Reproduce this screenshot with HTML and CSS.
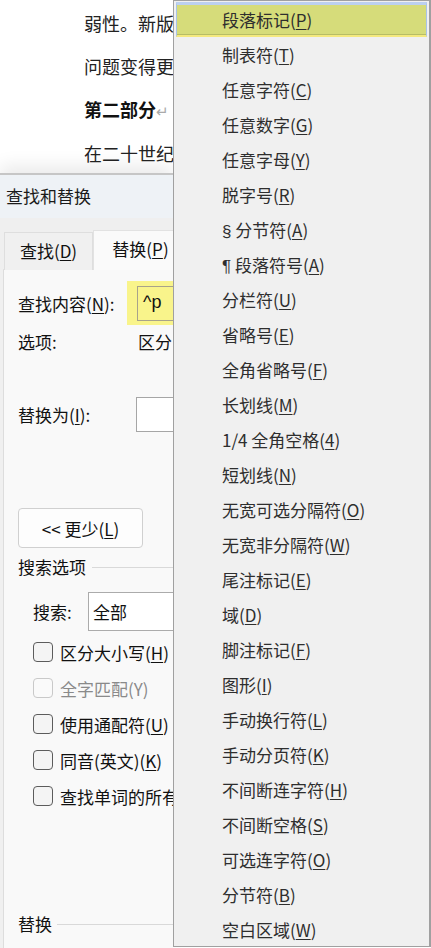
FILE: index.html
```html
<!DOCTYPE html>
<html lang="zh-CN">
<head>
  <meta charset="UTF-8" />
  <meta name="viewport" content="width=device-width, initial-scale=1.0" />
  <title>查找和替换</title>
  <link rel="stylesheet" href="styles.css">
</head>
<body>
  <div class="doc">
    <p>弱性。新版</p>
    <p>问题变得更</p>
    <p><b>第二部分</b><span class="pmark">↵</span></p>
    <p>在二十世纪</p>
  </div>

  <div class="dialog">
    <div class="titlebar">查找和替换</div>
    <div class="tabs">
      <div class="tab">查找(<u>D</u>)</div>
      <div class="tab active">替换(<u>P</u>)</div>
    </div>
    <div class="panel">
      <div class="row find-row">
        <span class="label w-find">查找内容(<u>N</u>):</span>
        <span class="hl"><span class="input">^p</span></span>
      </div>
      <div class="row opt-row">
        <span class="label w-opt">选项:</span>
        <span>区分</span>
      </div>
      <div class="row repl-row">
        <span class="label w-repl">替换为(<u>I</u>):</span>
        <span class="input wide"></span>
      </div>
      <button class="btn">&lt;&lt; 更少(<u>L</u>)</button>

      <div class="group">搜索选项<span class="rule"></span></div>
      <div class="row search-row">
        <span class="label w-search">搜索:</span>
        <span class="select">全部</span>
      </div>
      <div class="checks">
        <div class="check"><span class="box"></span>区分大小写(<u>H</u>)</div>
        <div class="check disabled"><span class="box"></span>全字匹配(Y)</div>
        <div class="check"><span class="box"></span>使用通配符(<u>U</u>)</div>
        <div class="check"><span class="box"></span>同音(英文)(<u>K</u>)</div>
        <div class="check"><span class="box"></span>查找单词的所有</div>
      </div>

      <div class="group second">替换<span class="rule"></span></div>
    </div>
  </div>

  <ul class="menu">
    <li class="current">段落标记(<u>P</u>)</li>
    <li>制表符(<u>T</u>)</li>
    <li>任意字符(<u>C</u>)</li>
    <li>任意数字(<u>G</u>)</li>
    <li>任意字母(<u>Y</u>)</li>
    <li>脱字号(<u>R</u>)</li>
    <li><span class="sym">§</span> 分节符(<u>A</u>)</li>
    <li><span class="sym">¶</span> 段落符号(<u>A</u>)</li>
    <li>分栏符(<u>U</u>)</li>
    <li>省略号(<u>E</u>)</li>
    <li>全角省略号(<u>F</u>)</li>
    <li>长划线(<u>M</u>)</li>
    <li>1/4 全角空格(<u>4</u>)</li>
    <li>短划线(<u>N</u>)</li>
    <li>无宽可选分隔符(<u>O</u>)</li>
    <li>无宽非分隔符(<u>W</u>)</li>
    <li>尾注标记(<u>E</u>)</li>
    <li>域(<u>D</u>)</li>
    <li>脚注标记(<u>F</u>)</li>
    <li>图形(<u>I</u>)</li>
    <li>手动换行符(<u>L</u>)</li>
    <li>手动分页符(<u>K</u>)</li>
    <li>不间断连字符(<u>H</u>)</li>
    <li>不间断空格(<u>S</u>)</li>
    <li>可选连字符(<u>O</u>)</li>
    <li>分节符(<u>B</u>)</li>
    <li>空白区域(<u>W</u>)</li>
  </ul>
</body>
</html>
```

FILE: styles.css
```css
body {
  margin: 0;
  width: 431px;
  height: 948px;
  overflow: hidden;
  position: relative;
  background: #fff;
  font-family: "Noto Sans CJK SC", "Noto Sans", sans-serif;
  color: #111;
}
u { text-underline-offset: 2px; text-decoration-thickness: 1px; }

/* document behind the dialog (only the part left of the menu shows) */
.doc {
  width: 173px;
  height: 173px;
  overflow: hidden;
  padding: 2px 0 0 84px;
  box-sizing: border-box;
  font-size: 18px;
  color: #222;
  white-space: nowrap;
}
.doc p { margin: 0; line-height: 43px; }
.doc b { font-weight: bold; color: #111; }
.pmark { color: #aaa; font-size: 15px; }

/* dialog */
.dialog {
  width: 173px;
  overflow: hidden;
  border-top: 2px solid #c6c6c6;
  background: #f0f0f0;
  box-shadow: 0 -8px 16px rgba(0,0,0,0.08);
  height: 775px;
  font-size: 17px;
}
.titlebar {
  height: 43px;
  line-height: 42px;
  padding-left: 6px;
  background: #eef2f6;
  color: #1a1a1a;
}
.tabs {
  display: flex;
  padding: 14px 0 0 4px;
  height: 52px;
  box-sizing: border-box;
  background: #efefef;
}
.tab {
  flex: none;
  width: 89px;
  height: 38px;
  box-sizing: border-box;
  line-height: 36px;
  text-align: center;
  background: #f0f0f0;
  border: 1px solid #dedede;
  border-bottom: none;
}
.tab.active {
  width: 120px;
  height: 40px;
  margin-top: -2px;
  padding-right: 25px;
  background: #fafafa;
  border-color: #e2e2e2;
  z-index: 1;
}
.panel {
  margin-left: 3px;
  border-left: 1px solid #dddddd;
  border-top: 1px solid #e2e2e2;
  margin-top: -1px;
  background: #f9f9f9;
  height: 680px;
  padding-left: 14px;
  white-space: nowrap;
}
.row { display: flex; align-items: center; }
.label { flex: none; }
.w-find { width: 109px; }
.w-opt { width: 120px; }
.w-repl { width: 118px; }
.w-search { width: 55px; margin-left: 15px; }

.find-row { margin-top: 11px; height: 44px; }
.hl {
  flex: none;
  background: #f9f48b;
  padding: 5px 0 4px 10px;
  width: 60px;
}
.input {
  display: block;
  height: 35px;
  box-sizing: border-box;
  border: 1px solid #9a9a9a;
  border-right: none;
  padding-left: 5px;
  line-height: 31px;
  font-size: 18px;
  font-family: "Liberation Sans", "Noto Sans CJK SC", sans-serif;
}
.hl .input { background: transparent; border-color: #a8a38a; }
.input.wide { flex: none; width: 60px; background: #fff; border-color: #a6a6a6; }
.opt-row { height: 32px; }
.repl-row { margin-top: 40px; height: 35px; }

.btn {
  display: block;
  margin-top: 76px;
  width: 125px;
  height: 40px;
  background: #fdfdfd;
  border: 1px solid #d0d0d0;
  border-radius: 4px;
  font: inherit;
  color: #111;
  padding: 0;
}

.group {
  display: flex;
  align-items: center;
  margin-top: 8px;
  height: 22px;
  line-height: 22px;
}
.group .rule {
  flex: 1;
  height: 1px;
  background: #d9d9d9;
  margin-left: 6px;
}
.group.second { margin-top: 99px; }
.group.second .rule { margin-left: 5px; }

.search-row { margin-top: 14px; height: 39px; }
.select {
  flex: none;
  width: 90px;
  height: 39px;
  box-sizing: border-box;
  border: 1px solid #ababab;
  border-right: none;
  background: #fff;
  padding-left: 4px;
  line-height: 37px;
}

.checks { margin-top: 3px; }
.check {
  display: flex;
  align-items: center;
  height: 36px;
  padding-left: 15px;
}
.box {
  flex: none;
  width: 20px;
  height: 20px;
  box-sizing: border-box;
  border: 1px solid #5c5c5c;
  border-radius: 4px;
  background: #f4f4f4;
  margin-right: 7px;
}
.check.disabled { color: #8a8a8a; }
.check.disabled .box { border-color: #c9c9c9; background: #fafafa; }

/* special character dropdown menu */
.menu {
  position: absolute;
  left: 173px;
  top: 0;
  width: 258px;
  height: 947px;
  box-sizing: border-box;
  margin: 0;
  padding: 1px 2px 0;
  list-style: none;
  background: #f0f0f0;
  border: 1px solid #a0a0a0;
  border-right-width: 2px;
  font-size: 17px;
  color: #2e2e2e;
}
.menu li {
  height: 35px;
  line-height: 35px;
  padding-left: 46px;
  white-space: nowrap;
}
.menu .sym { font-family: "Liberation Sans", sans-serif; }
.menu li.current {
  background: #d6dc7a;
  border: 1px solid #a9c3e8;
  border-top: 3px solid #bcd0ef;
  border-bottom: 2px solid #f4e97e;
  box-shadow: inset 0 -1px 0 #b6bd66;
  line-height: 29px;
  padding-left: 45px;
  box-sizing: border-box;
}
```
